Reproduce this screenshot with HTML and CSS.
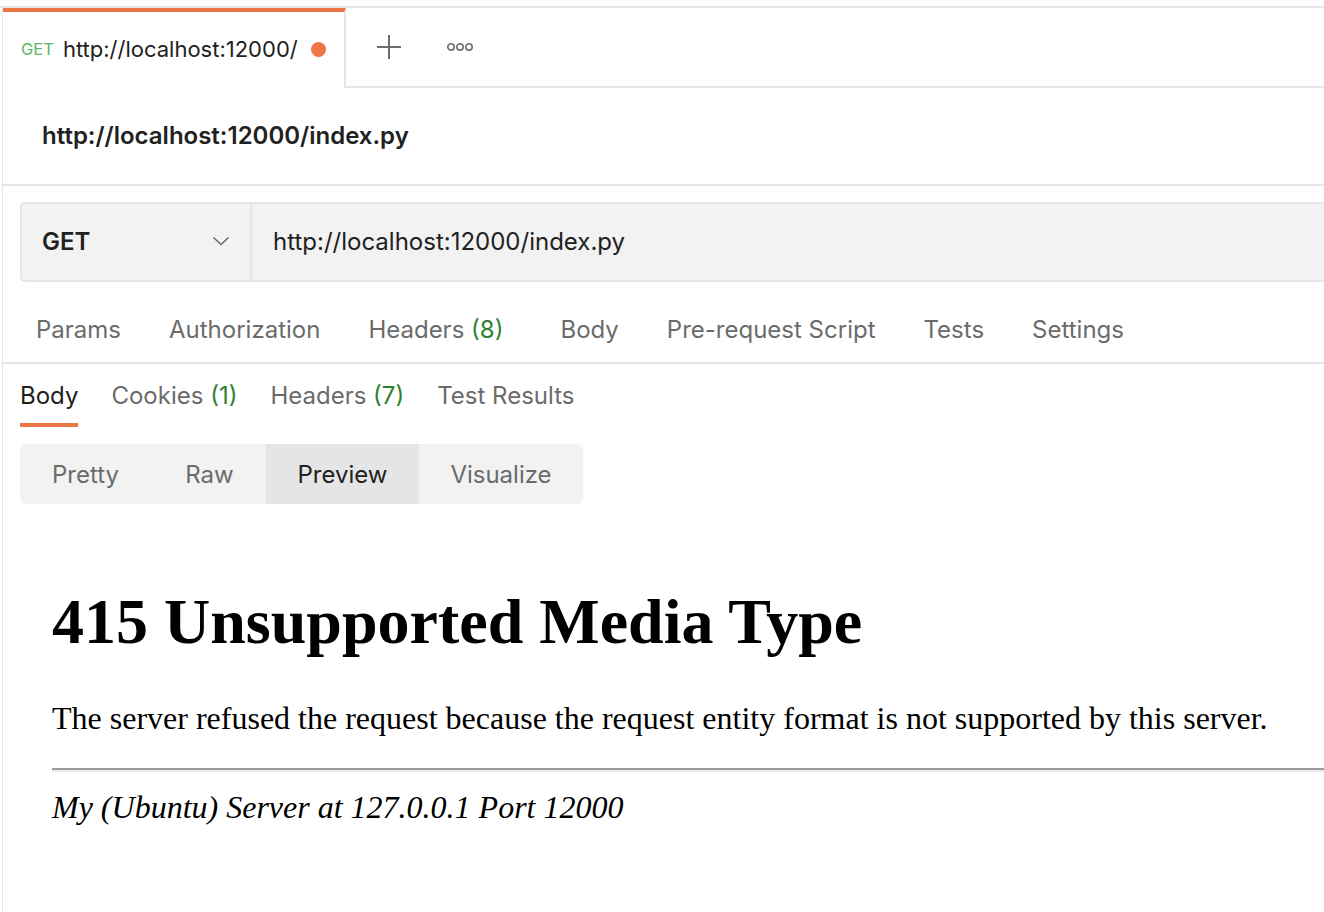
FILE: index.html
```html
<!DOCTYPE html>
<html lang="en">
<head>
<meta charset="utf-8">
<title>Postman - http://localhost:12000/index.py</title>
<link rel="stylesheet" href="styles.css">
</head>
<body>
<div class="topline"></div>
<div class="app">
  <div class="tabbar">
    <div class="tab">
      <span class="tab-method">GET</span>
      <span class="tab-title">http://localhost:12000/</span>
      <span class="tab-dot"></span>
    </div>
    <div class="tabbar-rest">
      <button class="icon-btn plus" aria-label="New tab">
        <svg width="26" height="26" viewBox="0 0 26 26"><path d="M13 1v24M1 13h24" stroke="#6b6b6b" stroke-width="2" fill="none"/></svg>
      </button>
      <button class="icon-btn more" aria-label="More">
        <svg width="30" height="10" viewBox="0 0 30 10"><circle cx="5" cy="5" r="3.2" stroke="#6b6b6b" stroke-width="1.6" fill="none"/><circle cx="14" cy="5" r="3.2" stroke="#6b6b6b" stroke-width="1.6" fill="none"/><circle cx="23" cy="5" r="3.2" stroke="#6b6b6b" stroke-width="1.6" fill="none"/></svg>
      </button>
    </div>
  </div>

  <div class="titlebar">http://localhost:12000/index.py</div>

  <div class="urlbar">
    <div class="method">
      <span>GET</span>
      <svg class="chev" width="18" height="10" viewBox="0 0 18 10"><path d="M1.5 1.5l7.5 7 7.5-7" stroke="#6b6b6b" stroke-width="1.6" fill="none"/></svg>
    </div>
    <div class="url">http://localhost:12000/index.py</div>
  </div>

  <div class="req-tabs">
    <span class="rtab">Params</span>
    <span class="rtab">Authorization</span>
    <span class="rtab rtab-wide">Headers <span class="count">(8)</span></span>
    <span class="rtab">Body</span>
    <span class="rtab">Pre-request Script</span>
    <span class="rtab">Tests</span>
    <span class="rtab">Settings</span>
  </div>

  <div class="resp-tabs">
    <div class="stab active"><span>Body</span></div>
    <div class="stab"><span>Cookies <span class="count">(1)</span></span></div>
    <div class="stab"><span>Headers <span class="count">(7)</span></span></div>
    <div class="stab"><span>Test Results</span></div>
  </div>

  <div class="segment">
    <span class="seg seg-pretty">Pretty</span>
    <span class="seg seg-raw">Raw</span>
    <span class="seg seg-preview selected">Preview</span>
    <span class="seg seg-visualize">Visualize</span>
  </div>

  <div class="preview">
    <h1>415 Unsupported Media Type</h1>
    <p>The server refused the request because the request entity format is not supported by this server.</p>
    <hr>
    <address>My (Ubuntu) Server at 127.0.0.1 Port 12000</address>
  </div>
</div>
</body>
</html>
```
FILE: styles.css
```css
html, body {
  margin: 0;
  padding: 0;
  background: #ffffff;
}
body {
  overflow: hidden;
  width: 1324px;
  height: 912px;
  font-family: Inter, "Noto Sans", sans-serif;
  color: #212121;
}
.topline {
  margin-top: 6px;
  height: 2px;
  width: 1600px;
  background: #e6e6e6;
}
.app {
  margin-left: 2px;
  border-left: 1px solid #e6e6e6;
  width: 1600px;
  height: 904px;
}
.tabbar {
  display: flex;
  height: 80px;
}
.tab {
  box-sizing: border-box;
  width: 343px;
  height: 80px;
  border-top: 4px solid #ef7446;
  border-right: 2px solid #e6e6e6;
  display: flex;
  align-items: center;
  padding: 0 0 2px 18px;
}
.tab-method {
  color: #5cb865;
  font-size: 16.5px;
  margin-right: 9px;
}
.tab-title {
  font-size: 22px;
  color: #212121;
}
.tab-dot {
  width: 15px;
  height: 15px;
  border-radius: 50%;
  background: #ef7446;
  margin-left: 13px;
}
.tabbar-rest {
  flex: 1;
  border-bottom: 2px solid #e6e6e6;
  display: flex;
  align-items: center;
}
.icon-btn {
  border: 0;
  background: none;
  padding: 0;
  display: flex;
  align-items: center;
  justify-content: center;
}
.plus {
  margin-left: 30px;
}
.more {
  margin-left: 44px;
}
.titlebar {
  box-sizing: border-box;
  height: 98px;
  border-bottom: 2px solid #e6e6e6;
  padding: 0 0 2px 39px;
  display: flex;
  align-items: center;
  font-size: 24px;
  font-weight: 600;
}
.urlbar {
  box-sizing: border-box;
  margin: 16px 0 0 17px;
  height: 80px;
  border: 2px solid #e6e6e6;
  border-right: 0;
  border-radius: 5px 0 0 5px;
  background: #f2f2f2;
  display: flex;
  align-items: stretch;
}
.method {
  box-sizing: border-box;
  width: 230px;
  border-right: 2px solid #e6e6e6;
  display: flex;
  align-items: center;
  justify-content: space-between;
  padding: 0 20px 2px 20px;
  font-size: 24px;
  font-weight: 600;
}
.url {
  display: flex;
  align-items: center;
  padding: 0 0 2px 21px;
  font-size: 24px;
}
.req-tabs {
  box-sizing: border-box;
  margin-top: 16px;
  height: 66px;
  border-bottom: 2px solid #e6e6e6;
  display: flex;
  align-items: center;
  padding: 0 0 2px 33px;
  font-size: 24px;
  color: #6b6b6b;
}
.rtab {
  margin-right: 48px;
}
.rtab-wide {
  margin-right: 57px;
}
.count {
  color: #2f8132;
}
.resp-tabs {
  display: flex;
  padding: 20px 0 0 17px;
  font-size: 24px;
  color: #6b6b6b;
}
.stab {
  display: flex;
  flex-direction: column;
  margin-right: 33px;
}
.stab > span {
  line-height: 24px;
  padding-bottom: 15px;
  border-bottom: 4px solid transparent;
}
.stab.active > span {
  color: #212121;
  border-bottom-color: #ef7446;
}
.segment {
  margin: 17px 0 0 17px;
  display: inline-flex;
  height: 60px;
  background: #f2f2f2;
  border-radius: 6px;
  overflow: hidden;
  font-size: 24px;
  color: #6b6b6b;
}
.seg {
  display: flex;
  align-items: center;
  justify-content: center;
}
.seg-pretty {
  width: 133px;
  justify-content: flex-start;
  padding-left: 32px;
  box-sizing: border-box;
}
.seg-raw {
  width: 113px;
}
.seg-preview {
  width: 153px;
}
.seg-visualize {
  width: 164px;
}
.seg.selected {
  background: #e5e5e5;
  color: #212121;
}
.preview {
  padding: 38px 32px 0 49px;
  font-family: "Liberation Serif", "Times New Roman", serif;
  font-size: 32px;
  color: #000;
}
.preview h1 {
  font-size: 64px;
  font-weight: bold;
  margin: 42.88px 0 41px;
}
.preview p {
  margin: 32px 0 31px;
}
.preview hr {
  height: 0;
  border: 0;
  border-top: 2px solid #9a9a9a;
  border-bottom: 2px solid #ececec;
  margin: 16px 0 17px;
}
.preview address {
  font-style: italic;
}
```
